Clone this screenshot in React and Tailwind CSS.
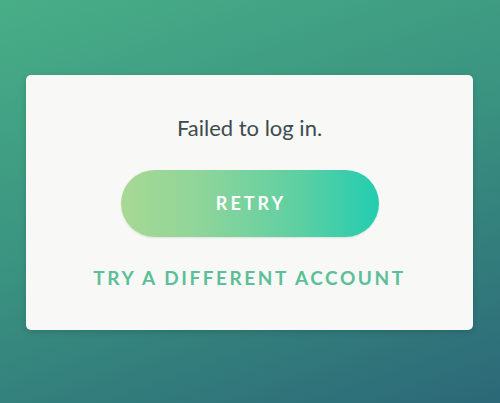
export default function App() {
  return (
    <div
      className="w-[500px] h-[403px] pt-[75px] px-[26px] bg-[linear-gradient(160deg,#48ae87_0%,#3a9480_45%,#2c6878_100%)]"
      style={{ fontFamily: "Lato, 'Open Sans', sans-serif" }}
    >
      {/* card */}
      <div className="w-[447px] h-[255px] rounded-[5px] bg-[#f8f8f7] shadow-[0_2px_6px_rgba(0,0,0,0.15)] flex flex-col items-center pt-[40px]">
        <p className="text-[22px] leading-[26px] text-[#3f4a4f]">Failed to log in.</p>

        <button className="mt-[29px] w-[258px] h-[67px] rounded-full bg-[linear-gradient(90deg,#a7d993_0%,#8fd59a_30%,#5ccfa3_70%,#22cdb0_100%)] shadow-[0_1px_2px_rgba(0,0,0,0.1)] text-white font-bold text-[18px] tracking-[3px] pl-[3px]">
          RETRY
        </button>

        <p className="mt-[29px] text-[19px] leading-[24px] font-bold tracking-[2.55px] text-[#5cbf97]">
          TRY A DIFFERENT ACCOUNT
        </p>
      </div>
    </div>
  );
}
